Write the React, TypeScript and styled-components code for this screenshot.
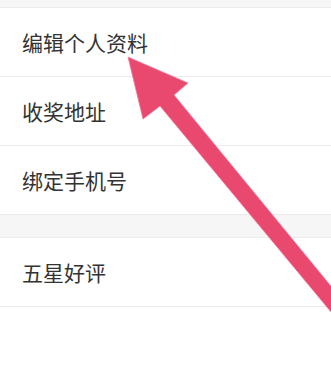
import React, { FC } from 'react';
import styled, { createGlobalStyle } from 'styled-components';

const GlobalStyle = createGlobalStyle`
  html, body {
    margin: 0;
    padding: 0;
    background: #ffffff;
  }
  body {
    font-family: 'Noto Sans CJK SC', 'Noto Sans', sans-serif;
  }
`;

const Page = styled.div`
  position: relative;
  width: 331px;
  height: 372px;
  overflow: hidden;
  background: #ffffff;
`;

const Gap = styled.div<{ $h: number }>`
  height: ${({ $h }) => $h}px;
  background: #f6f6f6;
  border-bottom: 1px solid #ececec;
  box-sizing: border-box;
`;

const Menu = styled.ul`
  list-style: none;
  margin: 0;
  padding: 0;
  background: #ffffff;
`;

const Item = styled.li`
  display: flex;
  align-items: center;
  height: 69px;
  box-sizing: border-box;
  padding-left: 22px;
  border-bottom: 1px solid #ebebeb;
  font-size: 21px;
  color: #333333;
  letter-spacing: 0;
`;

const Pointer = styled.svg`
  position: absolute;
  left: 0;
  top: 0;
  pointer-events: none;
`;

const Arrow: FC = () => (
  <Pointer width="331" height="372" viewBox="0 0 331 372">
    <polygon
      points="128,57 188,83 174,95 367,330 346,330 160,106 143,119"
      fill="#e9486f"
      stroke="#f27b98"
      strokeWidth="0.8"
      strokeLinejoin="round"
    />
  </Pointer>
);

const App: FC = () => (
  <Page>
    <GlobalStyle />
    <Gap $h={8} />
    <Menu>
      <Item>编辑个人资料</Item>
      <Item>收奖地址</Item>
      <Item>绑定手机号</Item>
    </Menu>
    <Gap $h={23} />
    <Menu>
      <Item>五星好评</Item>
    </Menu>
    <Arrow />
  </Page>
);

export default App;
